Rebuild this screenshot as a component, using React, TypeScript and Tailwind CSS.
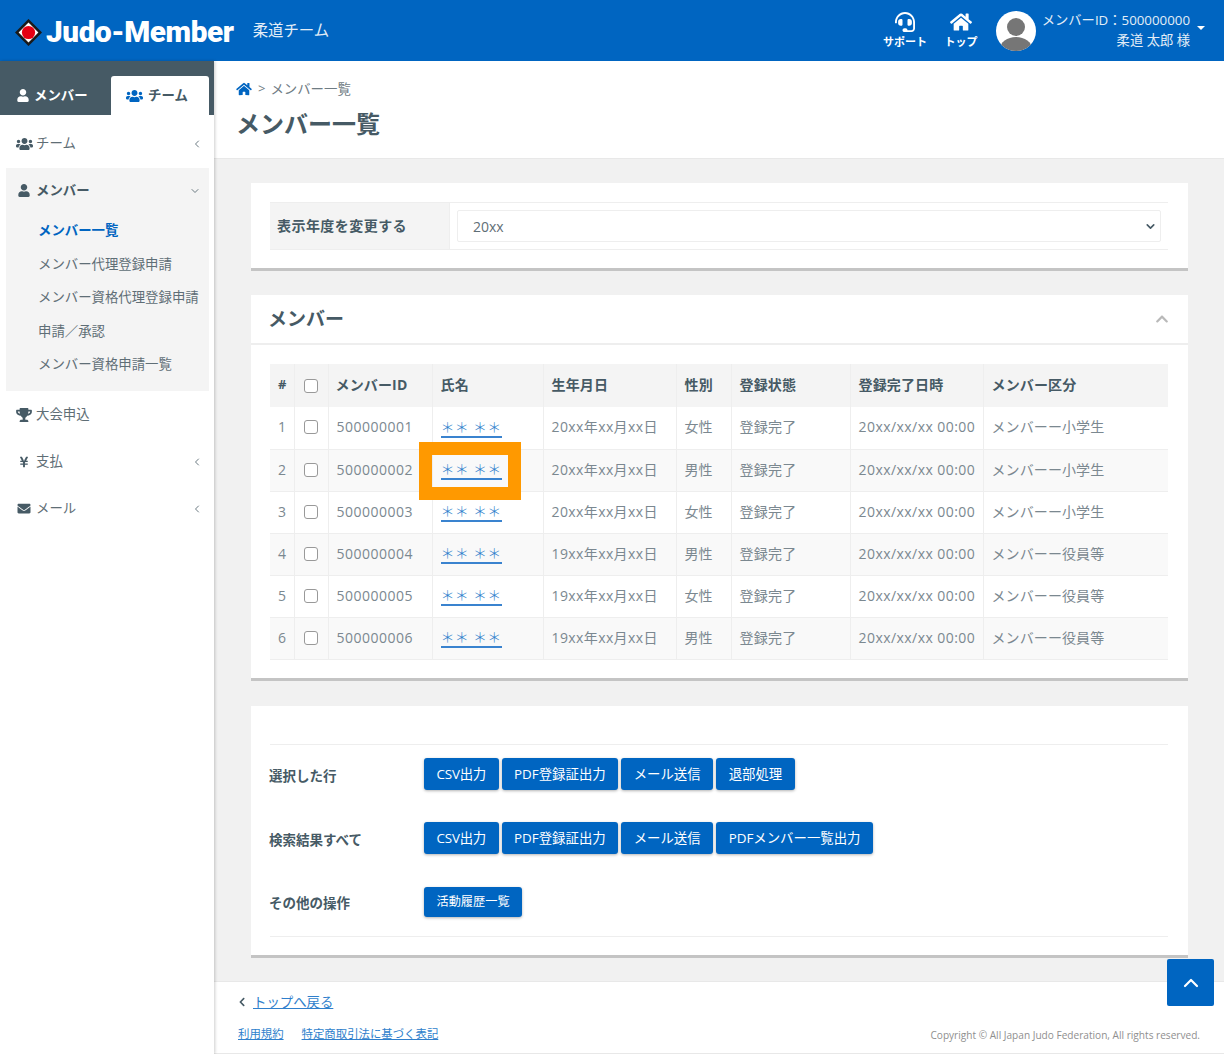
import React from "react";
import { FaUser, FaUsers, FaTrophy, FaYenSign, FaEnvelope, FaHome, FaHeadset, FaChevronLeft, FaChevronUp } from "react-icons/fa";
import { LuChevronLeft, LuChevronDown, LuChevronUp } from "react-icons/lu";

const rows = [
  ["1", "500000001", "20xx年xx月xx日", "女性", "メンバーー小学生"],
  ["2", "500000002", "20xx年xx月xx日", "男性", "メンバーー小学生"],
  ["3", "500000003", "20xx年xx月xx日", "女性", "メンバーー小学生"],
  ["4", "500000004", "19xx年xx月xx日", "男性", "メンバーー役員等"],
  ["5", "500000005", "19xx年xx月xx日", "女性", "メンバーー役員等"],
  ["6", "500000006", "19xx年xx月xx日", "男性", "メンバーー役員等"],
];

function Btn({ children, small }: { children: React.ReactNode; small?: boolean }) {
  return (
    <span className={`flex items-center justify-center rounded-[3px] bg-[#0065c1] px-[12.5px] text-white shadow-[0_1px_3px_rgba(0,0,0,0.3)] ${small ? "h-[30px] text-[12.2px]" : "h-[32px] text-[13.4px]"}`}>
      {children}
    </span>
  );
}

function Check() {
  return <span className="mx-auto block h-[14px] w-[14px] rounded-[3px] border-[1.5px] border-[#999999] bg-white" />;
}

function NavItem({ icon, label, arrow }: { icon: React.ReactNode; label: string; arrow?: boolean }) {
  return (
    <div className="flex h-[47px] items-center pl-[14px] pr-[11px] text-[13.4px] text-[#5f6e76]">
      <span className="flex w-[20px] justify-center text-[#465a65]">{icon}</span>
      <span className="ml-[2px] flex-1">{label}</span>
      {arrow && <LuChevronLeft className="h-[12px] w-[12px] text-[#6b7a82]" />}
    </div>
  );
}

export default function App() {
  return (
    <div className="relative flex h-[1054px] w-[1224px] flex-col overflow-hidden bg-white font-['Open_Sans','Noto_Sans_CJK_JP',sans-serif] text-[14px] text-[#465a65]">
      <header className="flex h-[61px] shrink-0 items-center bg-[#0065c1] text-white">
        <svg className="ml-[15px] mt-[3px] h-[27px] w-[27px]" viewBox="0 0 27 27">
          <rect x="5.2" y="5.2" width="16.6" height="16.6" transform="rotate(45 13.5 13.5)" fill="#fff" stroke="#1a1a1a" strokeWidth="2.6" />
          <circle cx="13.5" cy="13.5" r="6.6" fill="#e60012" />
        </svg>
        <span className="ml-[4px] mt-[3px] font-['Roboto',sans-serif] text-[29.7px] font-black tracking-[-0.4px]">Judo-Member</span>
        <span className="ml-[19px] text-[15.4px] text-[#e3edf7]">柔道チーム</span>
        <div className="flex-1" />
        <div className="flex w-[44px] flex-col items-center">
          <FaHeadset className="h-[20px] w-[20px]" />
          <span className="mt-[3px] text-[11px] font-bold leading-[14px]">サポート</span>
        </div>
        <div className="ml-[12px] flex w-[44px] flex-col items-center">
          <FaHome className="h-[20px] w-[22px]" />
          <span className="mt-[3px] text-[11px] font-bold leading-[14px]">トップ</span>
        </div>
        <svg className="ml-[13px] h-[40px] w-[40px]" viewBox="0 0 40 40">
          <defs>
            <clipPath id="av">
              <circle cx="20" cy="20" r="20" />
            </clipPath>
          </defs>
          <circle cx="20" cy="20" r="20" fill="#fff" />
          <g clipPath="url(#av)" fill="#767676">
            <circle cx="20" cy="16" r="9" />
            <ellipse cx="20" cy="38" rx="16" ry="12" />
          </g>
        </svg>
        <div className="mb-[1px] ml-[5px] flex w-[149px] flex-col items-end whitespace-nowrap text-[13.3px] leading-[20px] text-[#e3edf7]">
          <span>メンバーID：500000000</span>
          <span>柔道 太郎 様</span>
        </div>
        <span className="mb-[6px] ml-[7px] mr-[19px] h-0 w-0 border-x-[4px] border-t-[4px] border-x-transparent border-t-white" />
      </header>

      <div className="flex min-h-0 flex-1">
        <aside className="z-10 flex w-[214px] shrink-0 flex-col bg-white shadow-[1px_0_3px_rgba(0,0,0,0.2)]">
          <div className="flex h-[54px] items-end bg-[#465a65] text-[13.4px] font-bold">
            <div className="flex h-[39px] w-[111px] items-center gap-[5px] pl-[17px] text-white">
              <FaUser className="h-[13px] w-[12px]" />
              メンバー
            </div>
            <div className="flex h-[39px] w-[98px] items-center gap-[5px] rounded-t-[3px] bg-white pl-[15px] text-[#465a65]">
              <FaUsers className="h-[14px] w-[17px] text-[#0065c1]" />
              チーム
            </div>
          </div>
          <div className="pb-[1px] pt-[5px]">
            <NavItem icon={<FaUsers className="h-[14px] w-[17px]" />} label="チーム" arrow />
          </div>
          <div className="ml-[6px] mr-[5px] h-[223px] bg-[#f4f4f4]">
            <div className="flex h-[45px] items-center pl-[12px] pr-[8px] text-[13.4px] font-bold text-[#465a65]">
              <FaUser className="h-[13px] w-[12px]" />
              <span className="ml-[6px] flex-1">メンバー</span>
              <LuChevronDown className="h-[12px] w-[12px] font-normal text-[#6b7a82]" />
            </div>
            <div className="flex flex-col pl-[32px] pt-[1px] text-[13.4px] leading-[33.5px] text-[#5f6e76]">
              <span className="font-bold text-[#0065c1]">メンバー一覧</span>
              <span>メンバー代理登録申請</span>
              <span className="whitespace-nowrap">メンバー資格代理登録申請</span>
              <span>申請／承認</span>
              <span>メンバー資格申請一覧</span>
            </div>
          </div>
          <NavItem icon={<FaTrophy className="h-[14px] w-[16px]" />} label="大会申込" />
          <NavItem icon={<FaYenSign className="h-[12px] w-[10px]" />} label="支払" arrow />
          <NavItem icon={<FaEnvelope className="h-[13px] w-[14px]" />} label="メール" arrow />
        </aside>

        <main className="flex min-w-0 flex-1 flex-col bg-[#f1f1f1]">
          <div className="h-[98px] shrink-0 border-b border-[#e8e8e8] bg-white pl-[22px] pt-[18px]">
            <div className="flex h-[20px] items-center text-[13.4px] text-[#6f7c84]">
              <FaHome className="h-[14px] w-[16px] text-[#0065c1]" />
              <span className="ml-[6px] mr-[5px] text-[13px]">&gt;</span>
              メンバー一覧
            </div>
            <h1 className="mt-[7px] text-[24px] font-bold leading-[36px] text-[#465a65]">メンバー一覧</h1>
          </div>

          <div className="flex-1 pl-[37px] pr-[36px] pt-[24px]">
            <section className="h-[88px] border-b-[3px] border-[#c4c4c4] bg-white pl-[19px] pr-[20px] pt-[19px]">
              <div className="flex h-[48px] border-y border-[#eeeeee]">
                <div className="flex w-[180px] items-center border-r border-[#eeeeee] bg-[#f4f4f4] pb-[2px] pl-[7px] font-bold tracking-[0.45px]">表示年度を変更する</div>
                <div className="flex flex-1 items-center pl-[7px] pr-[7px]">
                  <div className="flex h-[32px] flex-1 items-center justify-between rounded-[2px] border border-[#eeeeee] pl-[15px] pr-[3px] text-[#5f6e76]">
                    20xx
                    <LuChevronDown className="h-[13px] w-[13px] text-[#465a65]" strokeWidth={3} />
                  </div>
                </div>
              </div>
            </section>

            <section className="mt-[24px] h-[386px] border-b-[3px] border-[#c4c4c4] bg-white">
              <div className="flex h-[50px] items-center justify-between border-b-[2px] border-[#eeeeee] pl-[17px] pr-[19px]">
                <h2 className="text-[19px] font-bold">メンバー</h2>
                <FaChevronUp className="h-[14px] w-[14px] text-[#b9b9b9]" />
              </div>
              <div className="pl-[19px] pr-[20px] pt-[19px]">
                <table className="w-[898px] table-fixed border-collapse text-[14px]">
                  <colgroup>
                    <col className="w-[24px]" />
                    <col className="w-[34px]" />
                    <col className="w-[104px]" />
                    <col className="w-[111px]" />
                    <col className="w-[133px]" />
                    <col className="w-[55px]" />
                    <col className="w-[119px]" />
                    <col className="w-[133px]" />
                    <col />
                  </colgroup>
                  <thead>
                    <tr className="h-[43px] bg-[#f4f4f4] text-left font-bold">
                      <th className="border-r border-[#eeeeee] pb-[2px] pl-[8px] text-[13px]">#</th>
                      <th className="border-r border-[#eeeeee]"><Check /></th>
                      {["メンバーID", "氏名", "生年月日", "性別", "登録状態", "登録完了日時", "メンバー区分"].map((h, i) => (
                        <th key={h} className={`pb-[2px] tracking-[0.15px] ${i === 0 ? "pl-[7px]" : "pl-[8px]"} ${i < 6 ? "border-r border-[#eeeeee]" : ""}`}>{h}</th>
                      ))}
                    </tr>
                  </thead>
                  <tbody>
                    {rows.map((r, i) => (
                      <tr key={r[0]} className={`h-[42px] border-b border-[#eeeeee] text-[#7b8890] ${i % 2 ? "bg-[#f9f9f9]" : "bg-white"}`}>
                        <td className="border-r border-[#eeeeee] pb-[2px] pl-[8px]">{r[0]}</td>
                        <td className="border-r border-[#eeeeee] pb-[1px]"><Check /></td>
                        <td className="border-r border-[#eeeeee] pb-[2px] pl-[8px] tracking-[0.5px]">{r[1]}</td>
                        <td className="relative border-r border-[#eeeeee] pb-[3px] pl-[8px]">
                          <span className="border-b-[2px] border-[#3a83cf] font-light tracking-[0.3px] text-[#2f7fcc]">＊＊ ＊＊</span>
                          {i === 1 && <span className="absolute left-[-14px] top-[-8px] h-[58px] w-[102px] border-[13px] border-[#ff9900]" />}
                        </td>
                        <td className="border-r border-[#eeeeee] pb-[2px] pl-[8px] tracking-[0.4px]">{r[2]}</td>
                        <td className="border-r border-[#eeeeee] pb-[2px] pl-[8px]">{r[3]}</td>
                        <td className="border-r border-[#eeeeee] pb-[2px] pl-[8px] tracking-[0.25px]">登録完了</td>
                        <td className="border-r border-[#eeeeee] pb-[2px] pl-[8px] tracking-[0.45px]">20xx/xx/xx 00:00</td>
                        <td className="pb-[2px] pl-[8px] tracking-[0.1px]">{r[4]}</td>
                      </tr>
                    ))}
                  </tbody>
                </table>
              </div>
            </section>

            <section className="mt-[25px] h-[252px] border-b-[3px] border-[#c4c4c4] bg-white pl-[19px] pr-[20px] pt-[38px]">
              <div className="h-[193px] border-y border-[#eeeeee] pt-[13px]">
                <div className="flex h-[32px] items-center">
                  <span className="-ml-[1px] mt-[5px] w-[155px] text-[13.5px] font-bold">選択した行</span>
                  <div className="flex gap-[3px]">
                    <Btn><span className="tracking-[-0.2px]">CSV出力</span></Btn><Btn>PDF登録証出力</Btn><Btn>メール送信</Btn><Btn>退部処理</Btn>
                  </div>
                </div>
                <div className="mt-[32px] flex h-[32px] items-center">
                  <span className="-ml-[1px] mt-[5px] w-[155px] text-[13.5px] font-bold">検索結果すべて</span>
                  <div className="flex gap-[3px]">
                    <Btn><span className="tracking-[-0.2px]">CSV出力</span></Btn><Btn>PDF登録証出力</Btn><Btn>メール送信</Btn><Btn>PDFメンバー一覧出力</Btn>
                  </div>
                </div>
                <div className="mt-[33px] flex h-[30px] items-center">
                  <span className="-ml-[1px] mt-[3px] w-[155px] text-[13.5px] font-bold">その他の操作</span>
                  <Btn small>活動履歴一覧</Btn>
                </div>
              </div>
            </section>
          </div>

          <footer className="flex h-[73px] shrink-0 flex-col border-y border-[#e8e8e8] bg-white pl-[24px] pr-[24px] pt-[9px]">
            <div className="flex h-[22px] items-center text-[13.4px]">
              <FaChevronLeft className="mr-[7px] h-[10px] w-[8px] text-[#465a65]" />
              <span className="text-[#2f7fcc] underline">トップへ戻る</span>
            </div>
            <div className="mt-[11px] flex items-center justify-between text-[11.4px]">
              <div className="flex gap-[18px] text-[#2f7fcc] underline">
                <span>利用規約</span>
                <span>特定商取引法に基づく表記</span>
              </div>
              <span className="mt-[4px] text-[10.1px] text-[#8f8f8f]">Copyright © All Japan Judo Federation, All rights reserved.</span>
            </div>
          </footer>
        </main>
      </div>

      <div className="absolute left-[1167px] top-[959px] flex h-[47px] w-[47px] items-center justify-center rounded-[2px] bg-[#0065c1]">
        <LuChevronUp className="h-[24px] w-[24px] text-white" strokeWidth={2.2} />
      </div>
    </div>
  );
}
